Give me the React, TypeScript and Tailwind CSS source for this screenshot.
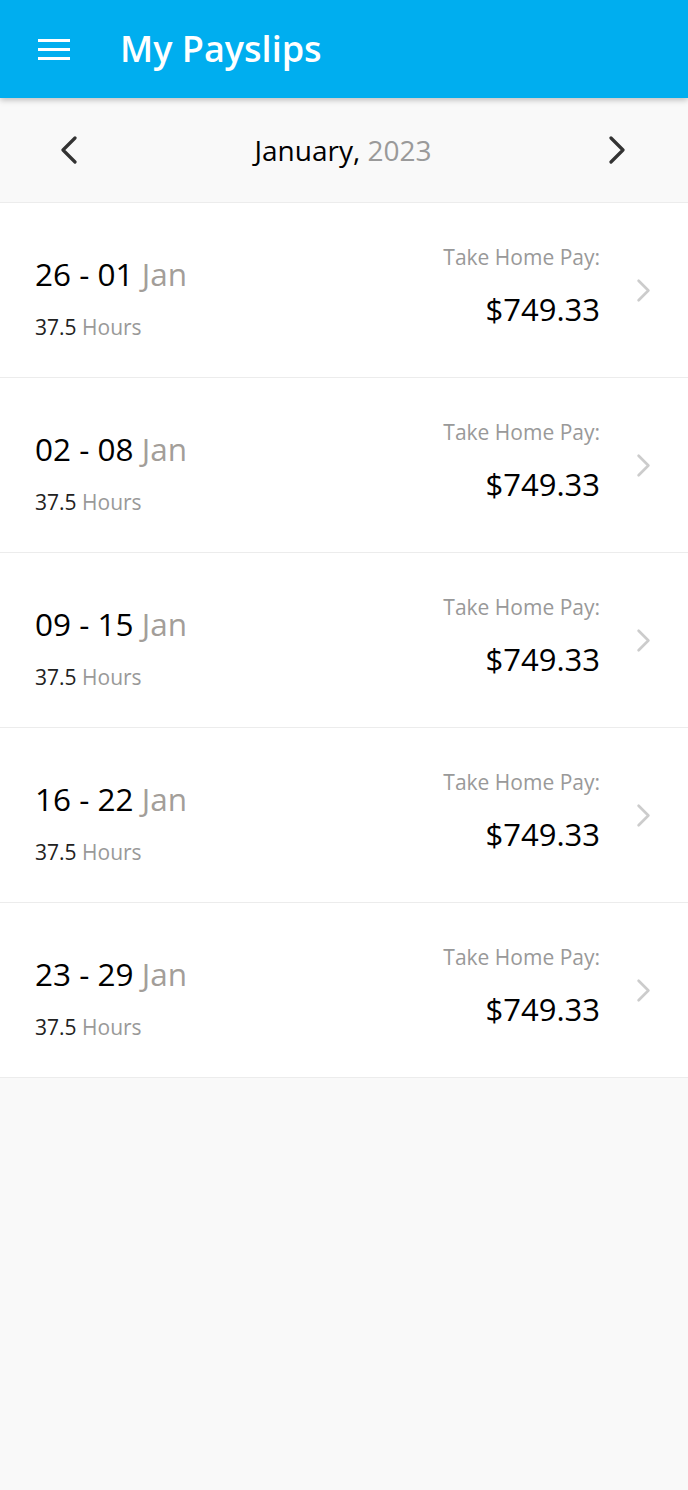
const payslips = [
  { from: '26', to: '01', month: 'Jan', hours: '37.5', pay: '$749.33' },
  { from: '02', to: '08', month: 'Jan', hours: '37.5', pay: '$749.33' },
  { from: '09', to: '15', month: 'Jan', hours: '37.5', pay: '$749.33' },
  { from: '16', to: '22', month: 'Jan', hours: '37.5', pay: '$749.33' },
  { from: '23', to: '29', month: 'Jan', hours: '37.5', pay: '$749.33' },
];

function Chevron({ dir, className }: { dir: 'left' | 'right'; className?: string }) {
  return (
    <svg viewBox="0 0 16 28" className={className} fill="none" stroke="currentColor" strokeWidth="3.2" strokeLinecap="round" strokeLinejoin="round">
      {dir === 'left' ? <path d="M14 2 L2 14 L14 26" /> : <path d="M2 2 L14 14 L2 26" />}
    </svg>
  );
}

export default function App() {
  return (
    <div className="min-h-screen bg-[#f9f9f9] font-['Open_Sans',sans-serif]">
      <header className="relative z-10 flex h-[98px] items-center bg-[#00aeef] shadow-[0_2px_6px_rgba(0,0,0,0.25)]">
        <div className="ml-[38px] flex w-[32px] flex-col gap-[6px]">
          <span className="h-[3px] bg-white" />
          <span className="h-[3px] bg-white" />
          <span className="h-[3px] bg-white" />
        </div>
        <h1 className="ml-[50px] text-[36px] font-semibold leading-none text-white">My Payslips</h1>
      </header>

      <div className="flex h-[105px] items-center justify-between border-b border-[#ececec] bg-[#f9f9f9] pl-[61px] pr-[63px]">
        <Chevron dir="left" className="h-[28px] w-[16px] text-[#333]" />
        <div className="text-[28px] text-black">
          January, <span className="text-[#9a9a9a]">2023</span>
        </div>
        <Chevron dir="right" className="h-[28px] w-[16px] text-[#333]" />
      </div>

      <ul>
        {payslips.map((p, i) => (
          <li key={i} className="flex h-[175px] items-start border-b border-[#ececec] bg-white pl-[35px] pr-[38px]">
            <div className="flex-1 pt-[55px]">
              <div className="text-[31.5px] leading-none text-black">
                {p.from} - {p.to} <span className="text-[#a39e99]">{p.month}</span>
              </div>
              <div className="mt-[27px] text-[21px] leading-none text-[#222]">
                {p.hours} <span className="text-[#999]">Hours</span>
              </div>
            </div>
            <div className="mr-[37px] flex flex-col items-end pt-[44px]">
              <div className="text-[21px] leading-none text-[#999]">Take Home Pay:</div>
              <div className="mt-[26px] text-[31px] leading-none text-black">{p.pay}</div>
            </div>
            <Chevron dir="right" className="h-[23px] w-[13px] self-center text-[#ccc]" />
          </li>
        ))}
      </ul>
    </div>
  );
}
